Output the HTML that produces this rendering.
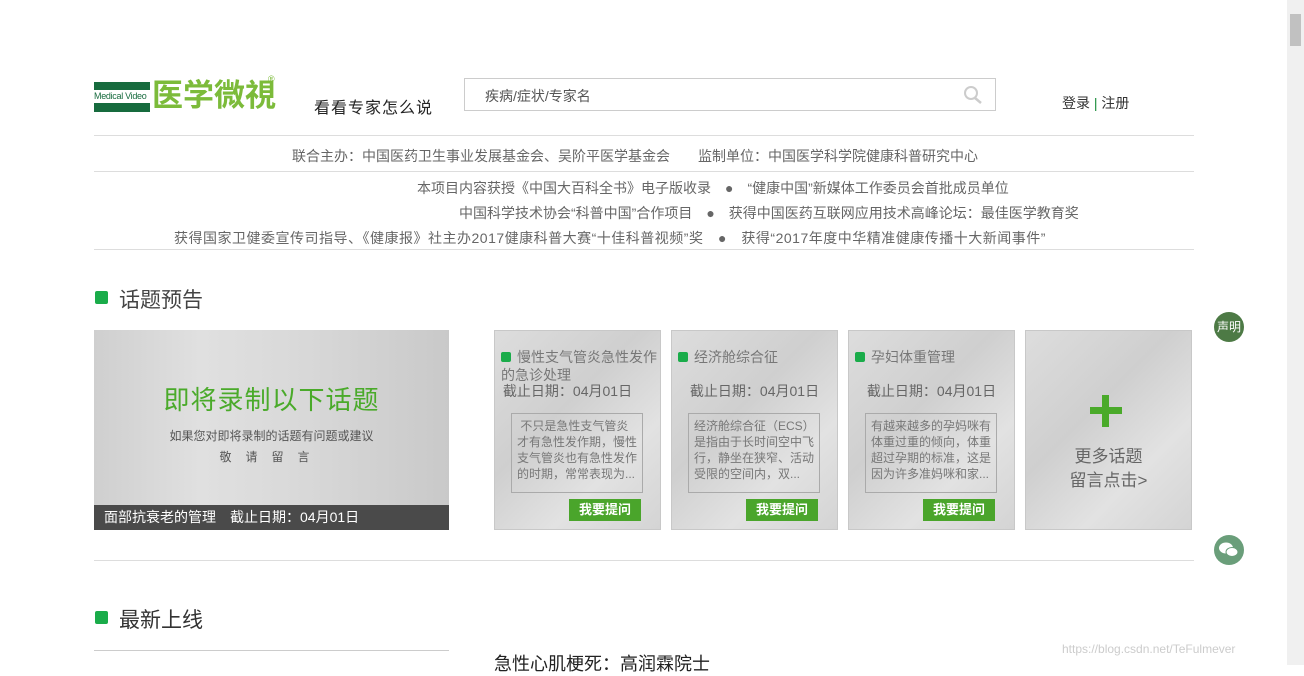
<!DOCTYPE html>
<html><head><meta charset="utf-8"><style>
*{margin:0;padding:0;box-sizing:border-box}
body{width:1304px;height:665px;overflow:hidden;background:#fff;font-family:"Liberation Sans","Noto Sans CJK SC",sans-serif;position:relative;color:#333}
.a{position:absolute}
.sb{position:absolute;left:1287px;top:0;width:17px;height:665px;background:#f0f0f0}
.sb i{position:absolute;left:3px;top:14px;width:11px;height:32px;background:#c1c1c1}
.line{position:absolute;left:94px;width:1100px;height:1px;background:#ddd}
.c{font-size:14px;color:#666;white-space:nowrap;position:absolute}
.card{position:absolute;top:330px;width:167px;height:200px;background:linear-gradient(135deg,#ddd,#cfcfcf 40%,#e2e2e2 70%,#d4d4d4);border:1px solid #c8c8c8}
.card .t{position:absolute;left:6px;top:17px;font-size:14px;color:#777;line-height:18px;width:160px}
.card .t b{display:inline-block;width:10px;height:10px;background:#1aac4a;border-radius:2px;margin-right:6px}
.card .d{position:absolute;left:0;width:100%;top:50px;text-align:center;font-size:14px;color:#666}
.card .x{position:absolute;left:16px;top:82px;width:132px;height:80px;border:1px solid #aaa;font-size:12px;color:#777;line-height:16px;padding:4px 2px 0 5px;overflow:hidden}
.card .btn{position:absolute;left:74px;top:168px;width:72px;height:22px;background:#4aa52b;color:#fff;font-size:13px;text-align:center;line-height:22px;font-weight:bold}
</style></head><body>
<div class="a" style="left:94px;top:82px;width:56px;height:30px;background:#176b3e"></div>
<div class="a" style="left:94px;top:90px;width:56px;height:13px;background:#fff;font-size:9px;color:#176b3e;line-height:13px;letter-spacing:-.3px">Medical Video</div>
<div class="a" style="left:152px;top:76px;font-size:31px;color:#7cbb3a;font-weight:bold;line-height:40px">医学微視</div>
<div class="a" style="left:268px;top:74px;font-size:9px;color:#7cbb3a">®</div>
<div class="a" style="left:314px;top:94px;font-size:16px;color:#222;letter-spacing:1px">看看专家怎么说</div>
<div class="a" style="left:464px;top:78px;width:532px;height:33px;border:1px solid #ccc"></div>
<div class="a" style="left:485px;top:86px;font-size:14px;color:#555">疾病/症状/专家名</div>
<svg class="a" style="left:962px;top:85px" width="22" height="20"><circle cx="9" cy="8" r="6" fill="none" stroke="#ccc" stroke-width="2"/><line x1="13" y1="13" x2="19" y2="18" stroke="#ccc" stroke-width="2.5"/></svg>
<div class="a" style="left:1062px;top:93px;font-size:14px;color:#333">登录 <span style="color:#1a8c3a">|</span> 注册</div>
<div class="line" style="top:135px"></div>
<div class="c" style="left:292px;top:146px">联合主办：中国医药卫生事业发展基金会、吴阶平医学基金会　　监制单位：中国医学科学院健康科普研究中心</div>
<div class="line" style="top:171px"></div>
<div class="c" style="left:417px;top:178px">本项目内容获授《中国大百科全书》电子版收录　●　“健康中国”新媒体工作委员会首批成员单位</div>
<div class="c" style="left:459px;top:203px">中国科学技术协会“科普中国”合作项目　●　获得中国医药互联网应用技术高峰论坛：最佳医学教育奖</div>
<div class="c" style="left:174px;top:228px;letter-spacing:.5px">获得国家卫健委宣传司指导、《健康报》社主办2017健康科普大赛“十佳科普视频”奖　●　获得“2017年度中华精准健康传播十大新闻事件”</div>
<div class="line" style="top:249px"></div>
<div class="a" style="left:95px;top:291px;width:13px;height:13px;background:#1aac4a;border-radius:2px"></div>
<div class="a" style="left:119px;top:284px;font-size:21px;color:#444">话题预告</div>
<div class="a" style="left:94px;top:330px;width:355px;height:200px;background:linear-gradient(90deg,#cfcfcf,#e0e0e0 30%,#d8d8d8 60%,#c9c9c9)"></div>
<div class="a" style="left:94px;top:380px;width:355px;text-align:center;font-size:26px;color:#4aaa2a;letter-spacing:1px">即将录制以下话题</div>
<div class="a" style="left:94px;top:427px;width:355px;text-align:center;font-size:12px;color:#555">如果您对即将录制的话题有问题或建议</div>
<div class="a" style="left:94px;top:448px;width:355px;text-align:center;font-size:12px;color:#555;letter-spacing:14px">敬请留言</div>
<div class="a" style="left:94px;top:505px;width:355px;height:25px;background:#4a4a4a;color:#fff;font-size:14px;line-height:25px;padding-left:10px">面部抗衰老的管理　截止日期：04月01日</div>
<div class="card" style="left:494px"><div class="t"><b></b>慢性支气管炎急性发作的急诊处理</div><div class="d" style="top:50px;left:-10px">截止日期：04月01日</div><div class="x">&nbsp;不只是急性支气管炎<br>才有急性发作期，慢性<br>支气管炎也有急性发作<br>的时期，常常表现为...</div><div class="btn">我要提问</div></div>
<div class="card" style="left:671px"><div class="t"><b></b>经济舱综合征</div><div class="d">截止日期：04月01日</div><div class="x">经济舱综合征（ECS）<br>是指由于长时间空中飞<br>行，静坐在狭窄、活动<br>受限的空间内，双...</div><div class="btn">我要提问</div></div>
<div class="card" style="left:848px"><div class="t"><b></b>孕妇体重管理</div><div class="d">截止日期：04月01日</div><div class="x">有越来越多的孕妈咪有<br>体重过重的倾向，体重<br>超过孕期的标准，这是<br>因为许多准妈咪和家...</div><div class="btn">我要提问</div></div>
<div class="card" style="left:1025px">
<div class="a" style="left:64px;top:76px;width:32px;height:7px;background:#4aaa2a"></div>
<div class="a" style="left:76px;top:64px;width:7px;height:32px;background:#4aaa2a"></div>
<div class="a" style="left:0;width:100%;top:114px;text-align:center;font-size:17px;color:#666;line-height:24px">更多话题<br>留言点击&gt;</div></div>
<div class="a" style="left:1214px;top:312px;width:30px;height:30px;border-radius:50%;background:#4d7a45;color:#fff;font-size:12px;text-align:center;line-height:30px">声明</div>
<div class="a" style="left:1214px;top:535px;width:30px;height:30px;border-radius:50%;background:#6a9e7a"></div>
<svg class="a" style="left:1217px;top:540px" width="24" height="20"><ellipse cx="9" cy="8" rx="7" ry="5.5" fill="#fff"/><ellipse cx="15" cy="12" rx="6" ry="4.5" fill="#fff" stroke="#6a9e7a"/></svg>
<div class="line" style="top:560px"></div>
<div class="a" style="left:95px;top:611px;width:13px;height:13px;background:#1aac4a;border-radius:2px"></div>
<div class="a" style="left:119px;top:604px;font-size:21px;color:#333">最新上线</div>
<div class="a" style="left:94px;top:650px;width:355px;height:1px;background:#ccc"></div>
<div class="a" style="left:494px;top:650px;font-size:18px;color:#222">急性心肌梗死：高润霖院士</div>
<div class="a" style="left:1062px;top:642px;font-size:12px;color:#ccc">https://blog.csdn.net/TeFulmever</div>
<div class="sb"><i></i></div>
</body></html>
